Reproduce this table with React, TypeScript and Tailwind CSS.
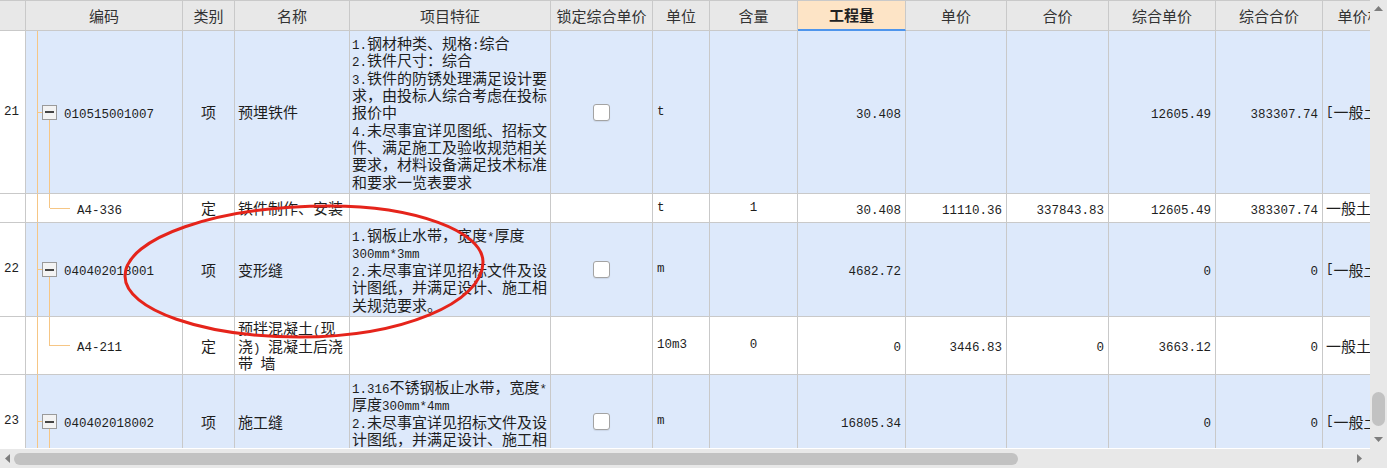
import React from "react";

type Row = {
  num?: string;
  code: string;
  parent: boolean;
  kind: string;
  name: string[];
  feature?: string[];
  check?: boolean;
  unit: string;
  qty?: string;
  amount: string;
  price?: string;
  total?: string;
  unitAll: string;
  totalAll: string;
  compose: string;
  h: string;
};

const rows: Row[] = [
  {
    num: "21",
    code: "010515001007",
    parent: true,
    kind: "项",
    name: ["预埋铁件"],
    feature: [
      "1.钢材种类、规格:综合",
      "2.铁件尺寸：综合",
      "3.铁件的防锈处理满足设计要",
      "求，由投标人综合考虑在投标",
      "报价中",
      "4.未尽事宜详见图纸、招标文",
      "件、满足施工及验收规范相关",
      "要求，材料设备满足技术标准",
      "和要求一览表要求",
    ],
    check: true,
    unit: "t",
    amount: "30.408",
    unitAll: "12605.49",
    totalAll: "383307.74",
    compose: "[一般土建工程]",
    h: "h-[163px]",
  },
  {
    code: "A4-336",
    parent: false,
    kind: "定",
    name: ["铁件制作、安装"],
    unit: "t",
    qty: "1",
    amount: "30.408",
    price: "11110.36",
    total: "337843.83",
    unitAll: "12605.49",
    totalAll: "383307.74",
    compose: "一般土建工程",
    h: "h-[29px]",
  },
  {
    num: "22",
    code: "040402018001",
    parent: true,
    kind: "项",
    name: ["变形缝"],
    feature: [
      "1.钢板止水带，宽度*厚度",
      "300mm*3mm",
      "2.未尽事宜详见招标文件及设",
      "计图纸，并满足设计、施工相",
      "关规范要求。",
    ],
    check: true,
    unit: "m",
    amount: "4682.72",
    unitAll: "0",
    totalAll: "0",
    compose: "[一般土建工程]",
    h: "h-[94px]",
  },
  {
    code: "A4-211",
    parent: false,
    kind: "定",
    name: ["预拌混凝土(现", "浇) 混凝土后浇", "带 墙"],
    unit: "10m3",
    qty: "0",
    amount: "0",
    price: "3446.83",
    total: "0",
    unitAll: "3663.12",
    totalAll: "0",
    compose: "一般土建工程",
    h: "h-[58px]",
  },
  {
    num: "23",
    code: "040402018002",
    parent: true,
    kind: "项",
    name: ["施工缝"],
    feature: [
      "1.316不锈钢板止水带，宽度*",
      "厚度300mm*4mm",
      "2.未尽事宜详见招标文件及设",
      "计图纸，并满足设计、施工相",
      "关规范要求。",
    ],
    check: true,
    unit: "m",
    amount: "16805.34",
    unitAll: "0",
    totalAll: "0",
    compose: "[一般土建工程]",
    h: "h-[94px]",
  },
];

const grid =
  "grid grid-cols-[26px_157px_52px_115px_201px_102px_57px_88px_108px_101px_102px_107px_107px_90px]";
const cell = "border-r border-b border-[#c9c9c9] flex items-center overflow-hidden whitespace-nowrap";

// ascii runs get the narrow mono face, like the half-width glyphs of the original
const Txt = ({ s }: { s: string }) => (
  <>
    {s.split(/([\x20-\x7e]+)/).map((p, i) =>
      /^[\x20-\x7e]+$/.test(p) ? (
        <span key={i} className="font-['Liberation_Mono',monospace] text-[12.5px] leading-none">
          {p}
        </span>
      ) : (
        p
      )
    )}
  </>
);

const Lines = ({ ls }: { ls: string[] }) => (
  <div>
    {ls.map((l, i) => (
      <div key={i} className="h-[17.4px] leading-[17.4px]">
        <Txt s={l} />
      </div>
    ))}
  </div>
);

const headers = [
  "",
  "编码",
  "类别",
  "名称",
  "项目特征",
  "锁定综合单价",
  "单位",
  "含量",
  "工程量",
  "单价",
  "合价",
  "综合单价",
  "综合合价",
  "单价构成",
];

const line = "#f6c685";

const Tree = ({ parent }: { parent: boolean }) => (
  <svg className="absolute inset-0 w-full h-full" shapeRendering="crispEdges">
    <line x1="11.5" y1="0" x2="11.5" y2="100%" stroke={line} />
    {parent ? (
      <>
        <line x1="11.5" y1="50%" x2="17" y2="50%" stroke={line} />
        <line x1="23.5" y1="50%" x2="23.5" y2="100%" stroke={line} />
      </>
    ) : (
      <>
        <line x1="23.5" y1="0" x2="23.5" y2="50%" stroke={line} />
        <line x1="23.5" y1="50%" x2="44" y2="50%" stroke={line} />
      </>
    )}
  </svg>
);

const Num = ({ v }: { v?: string }) => (
  <span className="w-full text-right pr-[4px]">{v ? <Txt s={v} /> : null}</span>
);

const DataRow = ({ r }: { r: Row }) => {
  const bg = r.parent ? "bg-[#dde9fb]" : "bg-white";
  return (
    <div className={`${grid} ${r.h}`}>
      <div className={`${cell} bg-white pl-[4px]`}>
        {r.num ? <Txt s={r.num} /> : null}
      </div>
      <div className={`${cell} ${bg} relative`}>
        <Tree parent={r.parent} />
        {r.parent ? (
          <div className="relative flex items-center pl-[16px]">
            <div className="w-[15px] h-[15px] border border-[#9a9a9a] bg-[#f3f3f3] flex items-center justify-center">
              <div className="w-[9px] h-[2px] bg-[#444]" />
            </div>
            <span className="ml-[7px]">
              <Txt s={r.code} />
            </span>
          </div>
        ) : (
          <span className="relative pl-[51px]">
            <Txt s={r.code} />
          </span>
        )}
      </div>
      <div className={`${cell} ${bg} justify-center`}>{r.kind}</div>
      <div className={`${cell} ${bg} pl-[3px]`}>
        <Lines ls={r.name} />
      </div>
      <div className={`${cell} ${bg} pl-[2px]`}>
        <Lines ls={r.feature ?? []} />
      </div>
      <div className={`${cell} ${bg} justify-center`}>
        {r.check ? (
          <div className="w-[17px] h-[17px] rounded-[3px] border border-[#a3a3a3] bg-white shadow-[0_1px_1px_rgba(0,0,0,0.08)]" />
        ) : null}
      </div>
      <div className={`${cell} ${bg} pl-[4px]`}>
        <Txt s={r.unit} />
      </div>
      <div className={`${cell} ${bg} justify-center`}>{r.qty ? <Txt s={r.qty} /> : null}</div>
      <div className={`${cell} ${bg}`}>
        <Num v={r.amount} />
      </div>
      <div className={`${cell} ${bg}`}>
        <Num v={r.price} />
      </div>
      <div className={`${cell} ${bg}`}>
        <Num v={r.total} />
      </div>
      <div className={`${cell} ${bg}`}>
        <Num v={r.unitAll} />
      </div>
      <div className={`${cell} ${bg}`}>
        <Num v={r.totalAll} />
      </div>
      <div className={`${cell} ${bg} pl-[3px]`}>
        <Txt s={r.compose} />
      </div>
    </div>
  );
};

export default function App() {
  return (
    <div className="w-[1387px] h-[468px] relative overflow-hidden bg-white text-[15px] leading-[17.4px] text-[#1e1e1e] font-['Noto_Sans_CJK_SC',sans-serif]">
      <div className="flex">
        <div className="w-[1370px] flex flex-col">
          <div className="h-[448px] overflow-hidden">
            <div className="w-[1413px]">
              <div className={`${grid} h-[31px] border-t border-[#c9c9c9] bg-[#e8e8e8] text-[#333]`}>
                {headers.map((h, i) =>
                  h === "工程量" ? (
                    <div
                      key={i}
                      className="border-r border-[#c9c9c9] border-b-2 border-b-[#4e95ec] bg-[#fde4c6] flex items-center justify-center font-bold text-[#222]"
                    >
                      {h}
                    </div>
                  ) : (
                    <div key={i} className={`${cell} justify-center`}>
                      {h}
                    </div>
                  )
                )}
              </div>
              {rows.map((r, i) => (
                <DataRow key={i} r={r} />
              ))}
            </div>
          </div>
          {/* horizontal scrollbar */}
          <div className="h-[20px] border-t border-white bg-[#e8e8e8] flex items-center">
            <div className="w-[14px] flex justify-center">
              <svg width="5" height="9">
                <polygon points="5,0 0,4.5 5,9" fill="#7d7d7d" />
              </svg>
            </div>
            <div className="w-[1004px] h-[12px] rounded-full bg-[#c2c2c2]" />
            <div className="flex-1" />
            <div className="w-[14px] flex justify-center mr-[4px]">
              <svg width="5" height="9">
                <polygon points="0,0 5,4.5 0,9" fill="#7d7d7d" />
              </svg>
            </div>
          </div>
        </div>
        {/* vertical scrollbar */}
        <div className="w-[17px] flex flex-col bg-[#e8e8e8]">
          <div className="h-[448px] flex flex-col items-center">
            <div className="h-[17px] flex items-center justify-center">
              <svg width="9" height="5">
                <polygon points="0,5 4.5,0 9,5" fill="#7d7d7d" />
              </svg>
            </div>
            <div className="flex-1" />
            <div className="w-[13px] h-[34px] rounded-full bg-[#c2c2c2]" />
            <div className="h-[5px]" />
            <div className="h-[17px] flex items-center justify-center">
              <svg width="9" height="5">
                <polygon points="0,0 9,0 4.5,5" fill="#7d7d7d" />
              </svg>
            </div>
          </div>
          <div className="h-[20px] bg-[#e8e8e8]" />
        </div>
      </div>
      {/* red marker ellipse drawn over the sheet */}
      <svg className="absolute inset-0 pointer-events-none" width="1387" height="468">
        <path
          d="M125 276 C125 238 217 206 330 206 C414 206 483 231 483 262 C483 303 401 337 300 337 C204 337 125 310 125 276 Z"
          fill="none"
          stroke="#e5241b"
          strokeWidth="3"
        />
      </svg>
    </div>
  );
}
